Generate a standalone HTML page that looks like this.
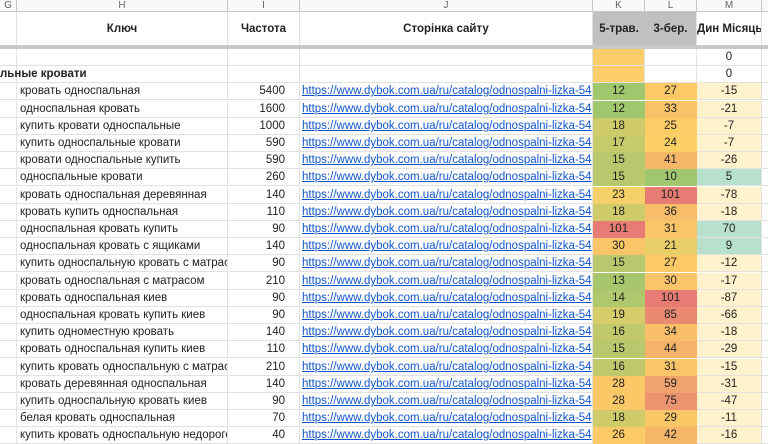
<!DOCTYPE html>
<html><head><meta charset="utf-8">
<style>
body{margin:0;width:768px;height:439px;overflow:hidden;background:#fff;font-family:"Liberation Sans","DejaVu Sans",sans-serif;font-size:11.5px;color:#222;position:relative}
.c{position:absolute;box-sizing:border-box;border-right:1px solid #e2e2e2;border-bottom:1px solid #e2e2e2;white-space:nowrap;overflow:hidden;line-height:16px}
.h{background:#f8f9fa;color:#666;text-align:center;font-size:10px;line-height:12px;border-color:#c7c7c7}
a{color:#1155cc;text-decoration:underline}
</style></head><body>
<div id="g"></div>
<script>
var X=[0,17,228,300,593,645,697,762,790];
var L=["G","H","I","J","K","L","M",""];
var out="";
function cell(i,y,h,txt,st){out+='<div class="c" style="left:'+X[i]+'px;top:'+y+'px;width:'+(X[i+1]-X[i])+'px;height:'+h+'px;'+(st||'')+'">'+txt+'</div>';}
for(var i=0;i<8;i++){out+='<div class="c h" style="left:'+X[i]+'px;top:0;width:'+(X[i+1]-X[i])+'px;height:12px">'+L[i]+'</div>';}
var hd=["","Ключ","Частота","Сторінка сайту","5-трав.","3-бер.","Дин Місяць",""];
for(var i=0;i<8;i++){var bg=(i==4||i==5)?'background:#c0c0c0;':'';cell(i,12,34,hd[i],bg+'font-weight:bold;text-align:center;line-height:34px;font-size:11.5px;'+(i==4?'border-right:none;':''));}
out+='<div style="position:absolute;left:0;top:45px;width:768px;height:4px;background:#c8c8c8"></div>';
var url='https://www.dybok.com.ua/ru/catalog/odnospalni-lizka-54';
var rows=[
["кровать односпальная",5400,12,27,-15],["односпальная кровать",1600,12,33,-21],["купить кровати односпальные",1000,18,25,-7],
["купить односпальные кровати",590,17,24,-7],["кровати односпальные купить",590,15,41,-26],["односпальные кровати",260,15,10,5],
["кровать односпальная деревянная",140,23,101,-78],["кровать купить односпальная",110,18,36,-18],["односпальная кровать купить",90,101,31,70],
["односпальная кровать с ящиками",140,30,21,9],["купить односпальную кровать с матрасом",90,15,27,-12],["кровать односпальная с матрасом",210,13,30,-17],
["кровать односпальная киев",90,14,101,-87],["односпальная кровать купить киев",90,19,85,-66],["купить одноместную кровать",140,16,34,-18],
["кровать односпальная купить киев",110,15,44,-29],["купить кровать односпальную с матрасом",210,16,31,-15],["кровать деревянная односпальная",140,28,59,-31],
["купить односпальную кровать киев",90,28,75,-47],["белая кровать односпальная",70,18,29,-11],["купить кровать односпальную недорого",40,26,42,-16]];
function mix(a,b,t){t=Math.max(0,Math.min(1,t));return 'rgb('+a.map(function(v,k){return Math.round(v+(b[k]-v)*t)}).join(',')+')';}
var G=[160,198,110],Y=[253,208,102],R=[230,124,115];
function sc(v,mn,md,mx){return v<=md?mix(G,Y,(v-mn)/(md-mn)):mix(Y,R,Math.pow((v-md)/(mx-md),0.8));}
var y=49,rh=17.2;
for(var i=0;i<8;i++){var st='';if(i==4)st='background:#fccd68;';if(i==6)st='text-align:center;';cell(i,y,rh,i==6?'0':'',st);}
y+=rh;
for(var i=0;i<8;i++){var st='',t='';if(i==4)st='background:#fccd68;';if(i==6){st='text-align:center;';t='0';}
 cell(i,y,rh,t,st);}
out+='<div style="position:absolute;left:0;top:'+y+'px;line-height:17px;font-weight:bold;font-size:11.5px">льные кровати</div>';
y+=rh;
rows.forEach(function(r){
 var yy=Math.round(y);
 cell(0,yy,rh,'');
 cell(1,yy,rh,r[0],'padding-left:3px;');
 cell(2,yy,rh,r[1],'text-align:right;padding-right:14px;');
 cell(3,yy,rh,'<a>'+url+'</a>','padding-left:2px;');
 cell(4,yy,rh,r[2],'text-align:center;border-color:transparent;background:'+sc(r[2],12,24,101));
 cell(5,yy,rh,r[3],'text-align:center;border-color:transparent;background:'+sc(r[3],10,24,101));
 cell(6,yy,rh,r[4],'text-align:center;background:'+(r[4]>0?'#b7e1cd':'#fff2cc'));
 cell(7,yy,rh,'');
 y+=rh;
});
document.getElementById('g').innerHTML=out;
</script>
</body></html>
